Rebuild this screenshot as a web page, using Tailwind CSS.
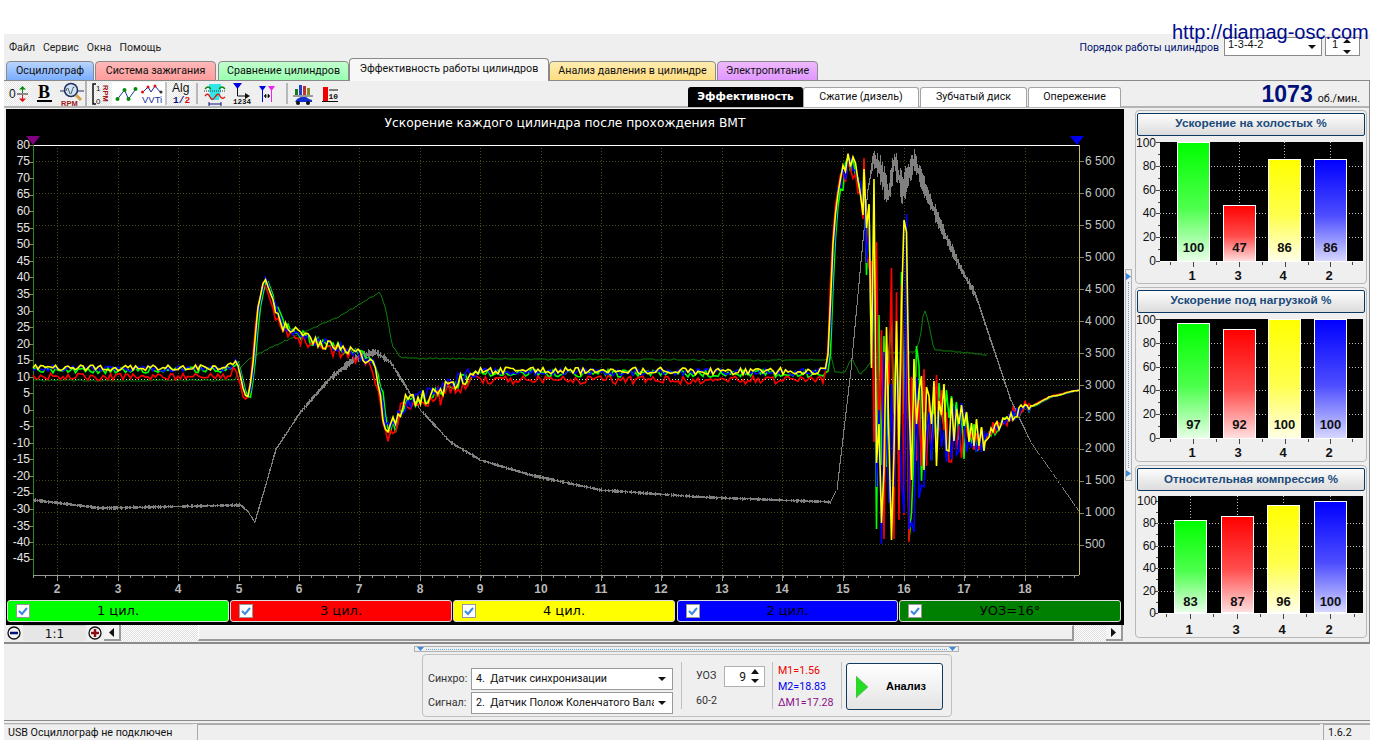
<!DOCTYPE html>
<html lang="ru">
<head>
<meta charset="utf-8">
<script src="https://cdn.jsdelivr.net/npm/@tailwindcss/browser@4"></script>
</head>
<body class="m-0 bg-white">
<div class="relative w-[1382px] h-[744px] overflow-hidden bg-white font-['Roboto','Liberation_Sans',sans-serif] text-[10.700px] text-[#111]">
  <a class="absolute left-[1172px] top-[20px] z-10 font-['Liberation_Sans',sans-serif] text-[20px] leading-[24px] text-[#000a8c]">http://diamag-osc.com</a>

  <div class="h-[34px]"></div>
  <div class="ml-[4px] w-[1366px] h-[706px] bg-[#efefef] flex flex-col">
    <!-- menu -->
    <div class="h-[24px] shrink-0 flex items-center relative">
      <div class="flex gap-[8px] pl-[5px] pt-[3px] text-[10.500px] text-[#222]"><span>Файл</span><span>Сервис</span><span>Окна</span><span>Помощь</span></div>
      <div class="ml-auto flex items-center pr-[10px] pt-[1px]">
        <span class="text-[#00106e] mr-[5px] relative top-[1px] text-[10.500px]">Порядок работы цилиндров</span>
        <div class="w-[98px] h-[19px] border border-[#8a8a8a] bg-white flex items-start pl-[3px] leading-[13px] font-['Liberation_Sans',sans-serif] text-[11px]"><span>1-3-4-2</span><svg class="ml-auto mr-[5px] mt-[7px]" width="8" height="5"><path d="M0 0h8l-4 4z" fill="#111"/></svg></div>
        <div class="ml-[3px] w-[35px] h-[19px] border border-[#8a8a8a] bg-white flex items-start pl-[6px] leading-[13px] font-['Liberation_Sans',sans-serif] text-[11px]"><span>1</span><svg class="ml-auto mr-[7px] mt-[1px]" width="9" height="16"><path d="M0 4h8l-4-4zM0 11h8l-4 4z" fill="#111"/></svg></div>
      </div>
    </div>
    <!-- tabs -->
    <div class="h-[23px] shrink-0 flex items-end pl-[2px] border-b border-[#8a8a8a]">
      <div class="w-[88px] h-[20px] -mb-px border border-[#8a8a8a] rounded-t-[4px] bg-linear-to-b from-[#b8d4ff] to-[#79adff] flex items-center justify-center">Осциллограф</div>
      <div class="ml-[1px] w-[121px] h-[20px] -mb-px border border-[#8a8a8a] rounded-t-[4px] bg-linear-to-b from-[#ffb8b8] to-[#ff9c9c] flex items-center justify-center">Система зажигания</div>
      <div class="ml-[2px] w-[131px] h-[20px] -mb-px border border-[#8a8a8a] rounded-t-[4px] bg-linear-to-b from-[#c2ffce] to-[#98ffb0] flex items-center justify-center">Сравнение цилиндров</div>
      <div class="w-[200px] h-[23px] -mb-px border border-[#8a8a8a] border-b-0 rounded-t-[4px] bg-[#f7f7f7] flex items-center justify-center pb-[2px]">Эффективность работы цилиндров</div>
      <div class="w-[167px] h-[20px] -mb-px border border-[#8a8a8a] rounded-t-[4px] bg-linear-to-b from-[#ffedb0] to-[#ffdd80] flex items-center justify-center">Анализ давления в цилиндре</div>
      <div class="ml-[1px] w-[101px] h-[20px] -mb-px border border-[#8a8a8a] rounded-t-[4px] bg-linear-to-b from-[#efb8ff] to-[#e096ff] flex items-center justify-center">Электропитание</div>
    </div>
    <!-- everything under tabs -->
    <div class="w-[1366px] h-[561px] shrink-0 border-r border-[#8a8a8a] flex flex-col">
      <!-- toolbar -->
      <div class="h-[27px] shrink-0 flex items-stretch pl-[1px] border-b-2 border-[#b4b4b4] relative">
        <div class="w-[26px] my-[1px] bg-[repeating-conic-gradient(#e4e4e4_0_25%,#fff_0_50%)] bg-[length:2px_2px] flex items-center justify-center">
          <svg width="20" height="22" viewBox="0 0 20 22"><text x="1" y="15" font-family="Liberation Sans" font-size="12" fill="#111">0</text><path d="M9 11h11" stroke="#222"/><path d="M14.500 3l3.500 3.500h-7zM14 6h1v4h-1z" fill="#0a8a0a"/><path d="M14 12h1v4h-1zM11 15.500h7l-3.500 3.500z" fill="#e01010"/></svg>
        </div>
        <div class="w-[27px] flex items-center justify-center">
          <svg width="18" height="22" viewBox="0 0 18 22"><text x="2" y="15" font-family="Liberation Serif" font-weight="700" font-size="18" fill="#000">B</text><path d="M1 18h15" stroke="#000" stroke-width="2"/></svg>
        </div>
        <div class="w-[29px] border-r-2 border-[#b4b4b4] flex items-center justify-center">
          <svg width="24" height="24" viewBox="0 0 24 24"><path d="M0 9h24" stroke="#203060"/><circle cx="11" cy="8" r="6.500" fill="#cfe4f5" stroke="#203060" stroke-width="1.500"/><path d="M6 9q1.500-6 3 0t3 0 2-3" fill="none" stroke="#334" stroke-width=".8"/><path d="M16 13l5 5" stroke="#d6a04a" stroke-width="3"/><text x="1" y="23.500" font-family="Liberation Sans" font-weight="700" font-size="7.500" fill="#a02020">RPM</text></svg>
        </div>
        <div class="w-[25px] my-[1px] bg-[repeating-conic-gradient(#e4e4e4_0_25%,#fff_0_50%)] bg-[length:2px_2px] flex items-center justify-center">
          <svg width="18" height="24" viewBox="0 0 18 24"><path d="M5 2H2v20h3" fill="none" stroke="#111" stroke-width="1.500"/><text x="5" y="9" font-family="Liberation Sans" font-size="8" fill="#111">1</text><text x="5" y="22" font-family="Liberation Sans" font-size="8" fill="#111">0</text><text x="0" y="0" transform="translate(11.500 3) rotate(90)" font-family="Liberation Sans" font-weight="700" font-size="7.500" fill="#a02020">RPM</text></svg>
        </div>
        <div class="w-[28px] my-[1px] bg-white flex items-center justify-center">
          <svg width="23" height="18" viewBox="0 0 22 18"><path d="M2 14L9 5l4 9 8-11" fill="none" stroke="#1a3a9a"/><circle cx="2" cy="14" r="2" fill="#0a8a0a"/><circle cx="9" cy="5" r="2" fill="#0a8a0a"/><circle cx="13" cy="14" r="2" fill="#0a8a0a"/><circle cx="20" cy="4" r="2" fill="#0a8a0a"/></svg>
        </div>
        <div class="w-[27px] my-[1px] bg-white border-r-2 border-[#c4c4c4] flex items-center justify-center">
          <svg width="23" height="23" viewBox="0 0 23 23"><path d="M1 11l6-6 3 5 4-6 6 7" fill="none" stroke="#1a2aa0"/><circle cx="1.500" cy="10" r="1.500" fill="#e01010"/><circle cx="7" cy="5" r="1.500" fill="#e01010"/><circle cx="14" cy="4" r="1.500" fill="#e01010"/><circle cx="20" cy="10" r="1.500" fill="#333"/><text x="1" y="21" font-family="Liberation Sans" font-size="9.500" fill="#1a2aa0">VVTi</text></svg>
        </div>
        <div class="w-[26px] my-[1px] bg-[repeating-conic-gradient(#e4e4e4_0_25%,#fff_0_50%)] bg-[length:2px_2px] flex items-center justify-center">
          <svg width="24" height="25" viewBox="0 0 24 25"><text x="4" y="11" font-family="Liberation Sans" font-size="12" fill="#111">Alg</text><text x="5" y="22" font-family="Liberation Mono" font-weight="700" font-size="9.500" fill="#10107a">1/<tspan fill="#e01010">2</tspan></text></svg>
        </div>
        <div class="w-[2px] ml-[3px] my-[2px] bg-[#b8b8b8]"></div>
        <div class="w-[34px] flex items-center justify-center">
          <svg width="22" height="24" viewBox="0 0 22 24"><path d="M5 2h12v6l-2 10H7L5 8z" fill="#30e6e6"/><path d="M1 7q3-4 6 0M15 7q3-4 6 0" fill="none" stroke="#0a8a0a" stroke-width="1.300"/><path d="M0 9h22" stroke="#333" stroke-dasharray="1 1"/><path d="M1 14q3-4 5 1t5 0 5-1 5 1" fill="none" stroke="#e01010" stroke-width="1.300"/><path d="M5 22h12M5 20v4M17 20v4" stroke="#10107a"/></svg>
        </div>
        <div class="w-[21px] flex items-center justify-center">
          <svg width="20" height="23" viewBox="0 0 20 23"><path d="M0 1h9L4.500 7z" fill="#0000e0"/><path d="M4.500 6v8h9" fill="none" stroke="#111"/><path d="M12 11l5 3-5 3z" fill="#111"/><text x="0" y="22" font-family="Liberation Mono" font-weight="700" font-size="7.500" fill="#111">1234</text></svg>
        </div>
        <div class="w-[28px] flex items-center justify-center">
          <svg width="16" height="18" viewBox="0 0 16 18"><path d="M0 1h7L3.500 6z" fill="#0000e0"/><path d="M3.500 5v12" stroke="#0000e0"/><path d="M9 1h7l-3.500 5z" fill="#f020f0"/><path d="M12.500 5v12" stroke="#f020f0"/><path d="M6 11h4M5 11l2-2v4zM11 11l-2-2v4z" fill="#111" stroke="#111" stroke-width=".5"/></svg>
        </div>
        <div class="w-[2px] ml-[5px] my-[2px] bg-[#b8b8b8]"></div>
        <div class="w-[32px] flex items-center justify-center">
          <svg width="22" height="22" viewBox="0 0 22 22"><path d="M2 6h3v6H2z" fill="#1a7a1a"/><path d="M6 2h3v10H6z" fill="#2040d0"/><path d="M10 3h3v9h-3z" fill="#c03030"/><path d="M14 5h3v7h-3z" fill="#8a8a20"/><path d="M0 13h20" stroke="#444"/><path d="M2 19l2-3 4-2h5l3 2 3 1v2z" fill="#1030d0"/><circle cx="5" cy="20" r="2" fill="#111"/><circle cx="15" cy="20" r="2" fill="#111"/></svg>
        </div>
        <div class="w-[20px] flex items-center justify-center">
          <svg width="16" height="16" viewBox="0 0 16 16"><path d="M1 1h5v14H1z" fill="#ee0000"/><path d="M7 4h9M0 15.500h16" stroke="#111"/><text x="6.500" y="13" font-family="Liberation Mono" font-weight="700" font-size="8" fill="#111">10</text></svg>
        </div>
        <!-- sub tabs -->
        <div class="absolute left-[684px] bottom-[-1px] flex items-end h-[21px]">
          <div class="w-[115px] h-[20px] rounded-t-[3px] bg-black text-white font-['DejaVu_Sans',sans-serif] font-bold text-[10.500px] flex items-center justify-center">Эффективность</div>
          <div class="w-[116px] h-[20px] rounded-t-[3px] bg-white border border-b-0 border-[#a4a4a4] flex items-center justify-center">Сжатие (дизель)</div>
          <div class="ml-[1px] w-[107px] h-[20px] rounded-t-[3px] bg-white border border-b-0 border-[#a4a4a4] flex items-center justify-center">Зубчатый диск</div>
          <div class="ml-[1px] w-[93px] h-[20px] rounded-t-[3px] bg-white border border-b-0 border-[#a4a4a4] flex items-center justify-center">Опережение</div>
        </div>
        <div class="ml-auto flex items-baseline pr-[9px] relative top-[-1px]">
          <span class="font-['Liberation_Sans',sans-serif] font-bold text-[23px] leading-[28px] text-[#00107a]">1073</span>
          <span class="ml-[5px] leading-[14px]">об./мин.</span>
        </div>
      </div>
      <!-- main row -->
      <div class="flex flex-1 pl-[2px] pt-[1px]">
        <!-- left column -->
        <div class="w-[1118px] flex flex-col">
          <div class="bg-black h-[516px] shrink-0 flex flex-col">
            <svg id="plot" width="1118" height="490" viewBox="6 109 1118 490" class="block shrink-0 font-['Liberation_Sans',sans-serif]">
              <g id="grid" shape-rendering="crispEdges"></g>
              <text x="565" y="127" text-anchor="middle" font-family="DejaVu Sans" font-size="12.300" fill="#fff">Ускорение каждого цилиндра после прохождения ВМТ</text>
              <g font-size="12" fill="#e4e4e4" text-anchor="end">
                <text x="30" y="149">80</text><text x="30" y="165">75</text><text x="30" y="182">70</text><text x="30" y="198">65</text><text x="30" y="215">60</text><text x="30" y="232">55</text><text x="30" y="248">50</text><text x="30" y="265">45</text><text x="30" y="281">40</text><text x="30" y="298">35</text><text x="30" y="315">30</text><text x="30" y="331">25</text><text x="30" y="348">20</text><text x="30" y="364">15</text><text x="30" y="381">10</text><text x="30" y="397">5</text><text x="30" y="414">0</text><text x="30" y="430">-5</text><text x="30" y="447">-10</text><text x="30" y="463">-15</text><text x="30" y="480">-20</text><text x="30" y="496">-25</text><text x="30" y="513">-30</text><text x="30" y="530">-35</text><text x="30" y="546">-40</text><text x="30" y="562">-45</text>
              </g>
              <g font-size="12" fill="#c4c4c4" text-anchor="start">
                <text x="1085" y="165">6 500</text><text x="1085" y="197">6 000</text><text x="1085" y="229">5 500</text><text x="1085" y="261">5 000</text><text x="1085" y="293">4 500</text><text x="1085" y="325">4 000</text><text x="1085" y="357">3 500</text><text x="1085" y="389">3 000</text><text x="1085" y="421">2 500</text><text x="1085" y="452">2 000</text><text x="1085" y="484">1 500</text><text x="1085" y="516">1 000</text><text x="1085" y="548">500</text>
              </g>
              <g font-size="12" font-weight="700" fill="#b8b8b8" text-anchor="middle">
                <text x="57" y="593">2</text><text x="118" y="593">3</text><text x="178" y="593">4</text><text x="239" y="593">5</text><text x="299" y="593">6</text><text x="359" y="593">7</text><text x="420" y="593">8</text><text x="480" y="593">9</text><text x="541" y="593">10</text><text x="601" y="593">11</text><text x="661" y="593">12</text><text x="722" y="593">13</text><text x="782" y="593">14</text><text x="843" y="593">15</text><text x="904" y="593">16</text><text x="964" y="593">17</text><text x="1025" y="593">18</text>
              </g>
              <g id="traces" fill="none" stroke-linejoin="miter"></g>
              <path d="M26 136h14l-7 9z" fill="#800080"/>
              <path d="M1070 136h14l-7 9z" fill="#0000f0"/>
            </svg>
            <!-- legend -->
            <div class="h-[24px] shrink-0 flex pl-[1px] pt-[1px] font-['DejaVu_Sans',sans-serif] text-[13px] text-black">
              <div class="relative w-[222px] h-[22px] rounded-[3px] border border-[#ddd] bg-[#00ff00] flex items-center justify-center"><span class="absolute left-[8px] top-[3px] w-[14px] h-[14px] bg-white border border-[#999] flex items-center justify-center"><svg width="10" height="10" viewBox="0 0 10 10"><path d="M1 5l3 3 5-6" fill="none" stroke="#3a8ae0" stroke-width="2"/></svg></span>1 цил.</div>
              <div class="ml-[1px] relative w-[222px] h-[22px] rounded-[3px] border border-[#ddd] bg-[#ff0000] flex items-center justify-center"><span class="absolute left-[8px] top-[3px] w-[14px] h-[14px] bg-white border border-[#999] flex items-center justify-center"><svg width="10" height="10" viewBox="0 0 10 10"><path d="M1 5l3 3 5-6" fill="none" stroke="#3a8ae0" stroke-width="2"/></svg></span>3 цил.</div>
              <div class="ml-[1px] relative w-[222px] h-[22px] rounded-[3px] border border-[#ddd] bg-[#ffff00] flex items-center justify-center"><span class="absolute left-[8px] top-[3px] w-[14px] h-[14px] bg-white border border-[#999] flex items-center justify-center"><svg width="10" height="10" viewBox="0 0 10 10"><path d="M1 5l3 3 5-6" fill="none" stroke="#3a8ae0" stroke-width="2"/></svg></span>4 цил.</div>
              <div class="ml-[2px] relative w-[221px] h-[22px] rounded-[3px] border border-[#ddd] bg-[#0000ff] flex items-center justify-center"><span class="absolute left-[8px] top-[3px] w-[14px] h-[14px] bg-white border border-[#999] flex items-center justify-center"><svg width="10" height="10" viewBox="0 0 10 10"><path d="M1 5l3 3 5-6" fill="none" stroke="#3a8ae0" stroke-width="2"/></svg></span>2 цил.</div>
              <div class="ml-[1px] relative w-[222px] h-[22px] rounded-[3px] border border-[#ddd] bg-[#008000] flex items-center justify-center"><span class="absolute left-[8px] top-[3px] w-[14px] h-[14px] bg-white border border-[#999] flex items-center justify-center"><svg width="10" height="10" viewBox="0 0 10 10"><path d="M1 5l3 3 5-6" fill="none" stroke="#3a8ae0" stroke-width="2"/></svg></span>УОЗ=16°</div>
            </div>
            <div class="h-[2px] shrink-0"></div>
          </div>
          <!-- scroll row -->
          <div class="h-[16px] shrink-0 flex items-stretch bg-[#efefef]">
            <div class="w-[16px] flex items-center justify-center"><svg width="14" height="14" viewBox="0 0 14 14"><circle cx="7" cy="7" r="6" fill="#f4f4f4" stroke="#111" stroke-width="1.300"/><path d="M3 7h8" stroke="#00107a" stroke-width="2.500"/></svg></div>
            <div class="w-[63px] ml-[1px] bg-[#e6e6e6] border-t border-[#ccc] flex items-center justify-center font-['DejaVu_Sans',sans-serif] text-[12px]">1:1</div>
            <div class="w-[15px] ml-[1px] flex items-center justify-center"><svg width="14" height="14" viewBox="0 0 14 14"><circle cx="7" cy="7" r="6" fill="#f4f4f4" stroke="#111" stroke-width="1.300"/><path d="M3 7h8M7 3v8" stroke="#8a1010" stroke-width="2.500"/></svg></div>
            <div class="w-[17px] ml-[2px] bg-[#f4f4f4] border-r-2 border-b-2 border-[#9a9a9a] flex items-center justify-center"><svg width="5" height="9"><path d="M5 0v9L0 4.500z" fill="#111"/></svg></div>
            <div class="w-[77px] bg-[repeating-conic-gradient(#dedede_0_25%,#fff_0_50%)] bg-[length:2px_2px]"></div>
            <div class="w-[876px] bg-[#f0f0f0] border-t border-l border-[#fff] border-b-2 border-r-2 border-b-[#9a9a9a] border-r-[#9a9a9a]"></div>
            <div class="w-[32px] bg-[repeating-conic-gradient(#dedede_0_25%,#fff_0_50%)] bg-[length:2px_2px]"></div>
            <div class="w-[17px] bg-[#f4f4f4] border-r-2 border-b-2 border-[#9a9a9a] flex items-center justify-center"><svg width="5" height="9"><path d="M0 0v9l5-4.500z" fill="#111"/></svg></div>
          </div>
        </div>
        <!-- vertical splitter -->
        <div class="w-[11px] flex flex-col pt-[160px]">
          <div class="ml-[1px] w-[7px] h-[212px] border border-[#b0b0b0] flex flex-col items-center justify-between py-[3px]">
            <svg width="5" height="7"><path d="M0 0v7l5-3.500z" fill="#3a8ae0"/></svg>
            <div class="flex-1 w-0 border-l border-dotted border-[#5aa0e8] my-[2px]"></div>
            <svg width="5" height="7"><path d="M0 0v7l5-3.500z" fill="#3a8ae0"/></svg>
          </div>
        </div>
        <!-- right panels -->
        <div class="w-[232px] flex flex-col gap-[3px] pt-[1px]">
          <div class="h-[174px] shrink-0 rounded-[4px] border border-[#b8b8b8] px-[1px] pt-[2px]">
            <div class="h-[23px] rounded-[2px] border border-[#0a3a64] bg-linear-to-b from-[#fdfdfd] to-[#dcdcdc] flex items-center justify-center pb-[1px] font-['Liberation_Sans',sans-serif] font-bold text-[11.800px] text-[#1a4a7a]">Ускорение на холостых %</div>
            <svg width="228" height="146" viewBox="1137 136 228 146" class="block font-['Liberation_Sans',sans-serif]">
              <rect x="1160" y="142" width="203" height="120" fill="#000"/>
              <path d="M1160 166h203M1160 190h203M1160 213h203M1160 237h203M1239.500 142v120M1284.500 142v120M1330.500 142v120" stroke="#bbb" stroke-dasharray="1 2" shape-rendering="crispEdges"/>
              <path d="M1160 261.500h203" stroke="#fff" shape-rendering="crispEdges"/>
              <path d="M1156 142h4M1156 166h4M1156 190h4M1156 213h4M1156 237h4M1156 261h4M1158 154h2M1158 178h2M1158 202h2M1158 225h2M1158 249h2M1193 262v5M1239 262v5M1285 262v5M1330 262v5M1170 262v3M1216 262v3M1262 262v3M1308 262v3M1352 262v3" stroke="#444" shape-rendering="crispEdges"/>
              <defs>
                <linearGradient id="gg" x1="0" y1="0" x2="0" y2="1"><stop offset="0" stop-color="#00ff00"/><stop offset=".55" stop-color="#4dff4d"/><stop offset="1" stop-color="#e8ffe8"/></linearGradient>
                <linearGradient id="gr" x1="0" y1="0" x2="0" y2="1"><stop offset="0" stop-color="#ff0000"/><stop offset=".55" stop-color="#ff4d4d"/><stop offset="1" stop-color="#ffe0e0"/></linearGradient>
                <linearGradient id="gy" x1="0" y1="0" x2="0" y2="1"><stop offset="0" stop-color="#ffff00"/><stop offset=".55" stop-color="#ffff4d"/><stop offset="1" stop-color="#ffffe8"/></linearGradient>
                <linearGradient id="gb" x1="0" y1="0" x2="0" y2="1"><stop offset="0" stop-color="#0000ff"/><stop offset=".55" stop-color="#4d4dff"/><stop offset="1" stop-color="#d8d8ff"/></linearGradient>
              </defs>
              <g stroke="#fff" shape-rendering="crispEdges">
                <rect x="1177.500" y="142.500" width="32" height="119" fill="url(#gg)"/>
                <rect x="1223.500" y="205.500" width="32" height="56" fill="url(#gr)"/>
                <rect x="1268.500" y="159.500" width="32" height="102" fill="url(#gy)"/>
                <rect x="1314.500" y="159.500" width="32" height="102" fill="url(#gb)"/>
              </g>
              <g font-size="13" font-weight="700" fill="#111" text-anchor="middle"><text x="1193.500" y="252">100</text><text x="1239.500" y="252">47</text><text x="1284.500" y="252">86</text><text x="1330.500" y="252">86</text></g>
              <g font-size="12" fill="#111" text-anchor="end"><text x="1156" y="147">100</text><text x="1156" y="170">80</text><text x="1156" y="194">60</text><text x="1156" y="217">40</text><text x="1156" y="241">20</text><text x="1156" y="265">0</text></g>
              <g font-size="13" font-weight="700" fill="#111" text-anchor="middle"><text x="1192" y="280">1</text><text x="1238" y="280">3</text><text x="1283" y="280">4</text><text x="1329" y="280">2</text></g>
            </svg>
          </div>
          <div class="h-[175px] shrink-0 rounded-[4px] border border-[#b8b8b8] px-[1px] pt-[2px]">
            <div class="h-[23px] rounded-[2px] border border-[#0a3a64] bg-linear-to-b from-[#fdfdfd] to-[#dcdcdc] flex items-center justify-center pb-[1px] font-['Liberation_Sans',sans-serif] font-bold text-[11.800px] text-[#1a4a7a]">Ускорение под нагрузкой %</div>
            <svg width="228" height="147" viewBox="1137 313 228 147" class="block font-['Liberation_Sans',sans-serif]">
              <rect x="1160" y="319" width="203" height="120" fill="#000"/>
              <path d="M1160 343h203M1160 367h203M1160 390h203M1160 414h203" stroke="#bbb" stroke-dasharray="1 2" shape-rendering="crispEdges"/>
              <path d="M1160 438.500h203" stroke="#fff" shape-rendering="crispEdges"/>
              <path d="M1156 319h4M1156 343h4M1156 367h4M1156 390h4M1156 414h4M1156 438h4M1158 331h2M1158 355h2M1158 379h2M1158 402h2M1158 426h2M1193 439v5M1239 439v5M1285 439v5M1330 439v5M1170 439v3M1216 439v3M1262 439v3M1308 439v3M1352 439v3" stroke="#444" shape-rendering="crispEdges"/>
              <g stroke="#fff" shape-rendering="crispEdges">
                <rect x="1177.500" y="323.500" width="32" height="115" fill="url(#gg)"/>
                <rect x="1223.500" y="329.500" width="32" height="109" fill="url(#gr)"/>
                <rect x="1268.500" y="319.500" width="32" height="119" fill="url(#gy)"/>
                <rect x="1314.500" y="319.500" width="32" height="119" fill="url(#gb)"/>
              </g>
              <g font-size="13" font-weight="700" fill="#111" text-anchor="middle"><text x="1193.500" y="429">97</text><text x="1239.500" y="429">92</text><text x="1284.500" y="429">100</text><text x="1330.500" y="429">100</text></g>
              <g font-size="12" fill="#111" text-anchor="end"><text x="1156" y="324">100</text><text x="1156" y="347">80</text><text x="1156" y="371">60</text><text x="1156" y="394">40</text><text x="1156" y="418">20</text><text x="1156" y="442">0</text></g>
              <g font-size="13" font-weight="700" fill="#111" text-anchor="middle"><text x="1192" y="457">1</text><text x="1238" y="457">3</text><text x="1283" y="457">4</text><text x="1329" y="457">2</text></g>
            </svg>
          </div>
          <div class="h-[173px] shrink-0 rounded-[4px] border border-[#b8b8b8] px-[1px] pt-[2px]">
            <div class="h-[23px] rounded-[2px] border border-[#0a3a64] bg-linear-to-b from-[#fdfdfd] to-[#dcdcdc] flex items-center justify-center pb-[1px] font-['Liberation_Sans',sans-serif] font-bold text-[11.600px] text-[#1a4a7a]">Относительная компрессия %</div>
            <svg width="228" height="145" viewBox="1137 491 228 145" class="block font-['Liberation_Sans',sans-serif]">
              <rect x="1158" y="496" width="205" height="118" fill="#000"/>
              <path d="M1158 523h205M1158 546h205M1158 568h205M1158 591h205M1190.500 496v118M1237.500 496v118M1283.500 496v118M1330.500 496v118" stroke="#bbb" stroke-dasharray="1 2" shape-rendering="crispEdges"/>
              <path d="M1158 613.500h205" stroke="#fff" shape-rendering="crispEdges"/>
              <path d="M1155 501h3M1155 523h3M1155 546h3M1155 568h3M1155 591h3M1155 613h3M1156 512h2M1156 534h2M1156 557h2M1156 579h2M1156 602h2M1190 614v5M1237 614v5M1283 614v5M1330 614v5M1166 614v3M1213 614v3M1260 614v3M1306 614v3M1354 614v3" stroke="#444" shape-rendering="crispEdges"/>
              <g stroke="#fff" shape-rendering="crispEdges">
                <rect x="1174.500" y="520.500" width="32" height="92" fill="url(#gg)"/>
                <rect x="1221.500" y="516.500" width="32" height="96" fill="url(#gr)"/>
                <rect x="1267.500" y="505.500" width="32" height="107" fill="url(#gy)"/>
                <rect x="1314.500" y="501.500" width="32" height="111" fill="url(#gb)"/>
              </g>
              <g font-size="13" font-weight="700" fill="#111" text-anchor="middle"><text x="1190.500" y="606">83</text><text x="1237.500" y="606">87</text><text x="1283.500" y="606">96</text><text x="1330.500" y="606">100</text></g>
              <g font-size="12" fill="#111" text-anchor="end"><text x="1157" y="505">100</text><text x="1156" y="527">80</text><text x="1156" y="550">60</text><text x="1156" y="572">40</text><text x="1156" y="595">20</text><text x="1156" y="617">0</text></g>
              <g font-size="13" font-weight="700" fill="#111" text-anchor="middle"><text x="1189" y="634">1</text><text x="1236" y="634">3</text><text x="1282" y="634">4</text><text x="1329" y="634">2</text></g>
            </svg>
          </div>
        </div>
      </div>
    </div>
    <!-- bottom panel -->
    <div class="h-[82px] shrink-0 border-t-2 border-[#8a8a8a] flex flex-col items-start">
      <div class="ml-[410px] mt-[2px] shrink-0 w-[545px] h-[6px] border border-[#b0b0b0] flex items-center justify-between px-[2px]">
        <svg width="7" height="4"><path d="M0 0h7L3.500 4z" fill="#3a8ae0"/></svg>
        <div class="flex-1 h-0 border-t border-dotted border-[#5aa0e8] mx-[2px]"></div>
        <svg width="7" height="4"><path d="M0 0h7L3.500 4z" fill="#3a8ae0"/></svg>
      </div>
      <div class="ml-[418px] mt-[2px] shrink-0 w-[530px] h-[63px] rounded-[4px] border border-[#c0c0c0] flex items-stretch">
        <div class="w-[250px] flex flex-col justify-end pl-[5px] pb-[2px] gap-[2px]">
          <div class="flex items-center h-[22px]"><span class="w-[43px] text-[#333]">Синхро:</span><div class="w-[202px] h-[22px] border border-[#9a9a9a] bg-white flex items-center pl-[4px]"><span>4.&nbsp; Датчик синхронизации</span><svg class="ml-auto mr-[6px]" width="8" height="5"><path d="M0 0h8l-4 4z" fill="#111"/></svg></div></div>
          <div class="flex items-center h-[22px]"><span class="w-[43px] text-[#333]">Сигнал:</span><div class="w-[202px] h-[22px] border border-[#9a9a9a] bg-white flex items-center pl-[4px]"><span class="w-[178px] overflow-hidden whitespace-nowrap">2.&nbsp; Датчик Полож Коленчатого Вала</span><svg class="ml-auto mr-[6px]" width="8" height="5"><path d="M0 0h8l-4 4z" fill="#111"/></svg></div></div>
        </div>
        <div class="w-[1px] my-[7px] ml-[8px] bg-[#c0c0c0]"></div>
        <div class="w-[90px] flex flex-col pl-[14px] pt-[11px]">
          <div class="flex items-center h-[21px]"><span class="w-[28px] text-[#333]">УОЗ</span><div class="w-[41px] h-[21px] border border-[#b0b0b0] bg-white flex items-center justify-end pr-[4px]"><span class="mr-[5px] text-[12px]">9</span><svg width="9" height="15"><path d="M0 5h8L4 0zM0 10h8l-4 4z" fill="#111"/></svg></div></div>
          <div class="mt-[6px] h-[16px] flex items-center text-[#333]">60-2</div>
        </div>
        <div class="w-[1px] my-[7px] bg-[#c0c0c0]"></div>
        <div class="w-[68px] pl-[5px] pt-[8px] flex flex-col leading-[16px]">
          <span class="text-[#ee0000]">M1=1.56</span>
          <span class="text-[#0000ee]">M2=18.83</span>
          <span class="text-[#8a108a] whitespace-nowrap">∆M1=17.28</span>
        </div>
        <div class="w-[1px] my-[7px] bg-[#c0c0c0]"></div>
        <div class="ml-[4px] mt-[8px] w-[97px] h-[47px] rounded-[3px] border border-[#123c5e] bg-linear-to-b from-white to-[#e4e4e4] flex items-center">
          <svg class="ml-[9px]" width="13" height="24"><path d="M0 1l12 11L0 23z" fill="#22dd22" stroke="#6a9a6a" stroke-width=".5"/></svg>
          <span class="ml-[17px] font-['Liberation_Sans',sans-serif] font-bold text-[11px] text-black">Анализ</span>
        </div>
      </div>
      <div class="mt-[3px] shrink-0 w-full h-[1px] bg-[#8a8a8a]"></div>
      <div class="mt-[2px] shrink-0 w-full h-[1px] bg-[#b0b0b0]"></div>
    </div>
    <!-- status bar -->
    <div class="h-[16px] shrink-0 flex">
      <div class="w-[189px] bg-[#efefef] border-t border-[#ddd] pl-[4px] leading-[15px]">USB Осциллограф не подключен</div>
      <div class="ml-[4px] w-[1123px] border-l border-t border-[#a8a8a8]"></div>
      <div class="ml-[3px] w-[47px] border-l border-t border-[#a8a8a8] pl-[4px] leading-[15px]">1.6.2</div>
    </div>
  </div>
</div>
<script>
(function(){
  var NS='http://www.w3.org/2000/svg';
  var seed=987654;
  function rnd(){seed=(seed*16807)%2147483647;return (seed-1)/2147483646;}
  function interp(k,x){
    for(var i=0;i<k.length-1;i++){
      if(x<=k[i+1][0]){
        var t=(x-k[i][0])/(k[i+1][0]-k[i][0]||1);
        return [k[i][1]+(k[i+1][1]-k[i][1])*t,(k[i][2]||0)+((k[i+1][2]||0)-(k[i][2]||0))*t];
      }
    }
    var l=k[k.length-1];return [l[1],l[2]||0];
  }
  function line(parent,d,color,w,crisp){
    var p=document.createElementNS(NS,'path');
    p.setAttribute('d',d);p.setAttribute('stroke',color);p.setAttribute('stroke-width',w);
    if(crisp)p.setAttribute('shape-rendering','crispEdges');
    p.setAttribute('fill','none');parent.appendChild(p);
  }
  var g=document.getElementById('grid'),d='';
  var ys=[161,193,225,257,289,321,353,385,417,448,480,512,544];
  ys.forEach(function(y){d+='M33 '+(y+.5)+'H1079';});
  var xs=[57,118,178,239,299,359,420,480,541,601,661,722,782,843,904,964,1025];
  xs.forEach(function(x){d+='M'+(x+.5)+' 145V575';});
  var gp=document.createElementNS(NS,'path');gp.setAttribute('d',d);gp.setAttribute('stroke','#4a4a12');gp.setAttribute('stroke-dasharray','1 2');g.appendChild(gp);
  var tk='';
  for(var x=33;x<1079;x+=12.1)tk+='M'+Math.round(x)+' 575v3';
  xs.forEach(function(x){tk+='M'+x+' 575v6';});
  line(g,tk,'#9a9a9a',1);
  var yt='';
  for(var y=145;y<575;y+=16.55)yt+='M29 '+Math.round(y)+'h4';
  for(var y2=161;y2<550;y2+=32)yt+='M1079 '+y2+'h5';
  line(g,yt,'#8a8a50',1);
  line(g,'M33 145.500H1079','#fff',1.5);
  line(g,'M33.500 145V575','#2a8a2a',1);
  line(g,'M1079.500 145V575','#c8c060',1);
  line(g,'M33 575.500H1079','#999',1);
  var cy=document.createElementNS(NS,'path');cy.setAttribute('d','M33 379.500H1079');cy.setAttribute('stroke','#c8f0b0');cy.setAttribute('stroke-dasharray','1 2');g.appendChild(cy);

  var t=document.getElementById('traces');
  var uoz=[[33,380],[100,381],[235,380],[240,368],[250,358],[270,348],[300,334],[340,316],[380,292],[386,310],[392,345],[400,357],[410,358],[500,359],[700,360],[826,360],[830,352],[835,372],[845,372],[852,358],[860,375],[875,358],[885,352],[900,353],[915,352],[920,340],[924,308],[928,320],[934,350],[960,352],[988,355]];
  d='M33 380';
  for(var xx=33;xx<=988;xx+=2){d+='L'+xx+' '+Math.round(interp(uoz,xx)[0]+(rnd()-.5)*1.2);}
  line(t,d,'#0a800a',1);
  var rpm=[[33,500,2],[100,508,2],[200,506,2],[240,505,2],[248,512,1.500],[254,522,1.500],[262,495,1.500],[275,450,2],[300,412,2.500],[330,378,3.500],[355,358,5],[375,352,5],[390,362,3],[420,410,2],[450,442,2],[480,460,2],[530,475,2],[600,490,2],[700,497,2],[830,502,2],[836,490,1],[850,370,1],[860,262,1.500],[867,190,2],[873,158,10],[880,170,20],[888,195,18],[894,160,14],[902,190,20],[914,160,16],[925,190,12],[940,225,8],[960,268,6],[975,295,5],[990,340,3],[1010,400,1.500],[1030,442,1],[1050,470,1],[1079,512,1]];
  var g2='',prev=null;
  for(var r=33;r<=1079;r++){
    var v=interp(rpm,r);var a=v[1]*(.2+rnd()*.8);
    var y1=v[0]-a,y3=v[0]+a;
    if(prev!==null&&Math.abs(prev-v[0])>2){y1=Math.min(y1,prev);y3=Math.max(y3,prev);}
    g2+='M'+r+' '+y1.toFixed(1)+'V'+y3.toFixed(1);prev=v[0];
  }
  line(t,g2,'#808080',1,true);
  var base=[[33,368],[100,369],[230,368],[236,360],[240,372],[245,395],[249,397],[253,370],[258,310],[265,278],[272,296],[282,325],[290,330],[310,340],[340,348],[360,355],[372,362],[380,385],[385,425],[390,430],[396,420],[405,402],[420,398],[440,392],[460,380],[480,372],[826,372],[829,352],[833,250],[838,190],[845,170],[852,160],[858,180],[864,210]];
  var tail=[[985,440],[990,432],[1000,425],[1020,410],[1035,405],[1050,397],[1079,390]];
  var top=[[862,150],[868,160],[875,180],[880,310],[888,270],[893,175],[898,300],[905,190],[912,250],[918,360],[930,370],[945,380],[960,395],[975,412],[985,428]];
  var bot=[[862,240],[870,330],[875,572],[880,550],[895,565],[905,520],[912,560],[920,510],[935,470],[950,465],[965,465],[985,452]];
  function nf(x){
    if(x<236)return 1;
    if(x<275)return .3;
    if(x<380)return 1.8;
    if(x<470)return 2.8;
    if(x<826)return 1.2;
    if(x<838)return .4;
    return 4;
  }
  function trace(color,shift,off,hiSpread,loSpread,noise,extraLow){
    var s='',x=33,first=true;
    for(;x<864;x+=2.500){
      var y=interp(base,x-shift)[0]+off*(x<240||(x>480&&x<830)?1:.5)+(rnd()-.5)*noise*nf(x);
      if(extraLow&&x>395&&x<470&&rnd()<.4)y+=rnd()*14;
      s+=(first?'M':'L')+x.toFixed(1)+' '+y.toFixed(1);first=false;
    }
    var hi=false;
    for(x=864;x<985;x+=2.500){
      var tp=interp(top,x)[0],bt=interp(bot,x)[0];
      if(rnd()<.8)hi=!hi;
      var yy=hi?tp+(bt-tp)*hiSpread*rnd():bt-(bt-tp)*loSpread*rnd();
      s+='L'+x.toFixed(1)+' '+yy.toFixed(0);
    }
    for(x=985;x<=1079;x+=2){
      s+='L'+x+' '+(interp(tail,x-shift)[0]+(rnd()-.5)*(x<1030?noise*2:.8)).toFixed(1);
    }
    line(t,s,color,1.600);
  }
  trace('#00ff00',1.500,1.500,.35,.7,6,false);
  trace('#ff0000',-1.500,8,.45,.6,7,true);
  trace('#0000ff',.5,0,.7,.25,6,false);
  trace('#ffff00',-.5,-1,.3,.65,6,false);
})();
</script>
</body>
</html>
